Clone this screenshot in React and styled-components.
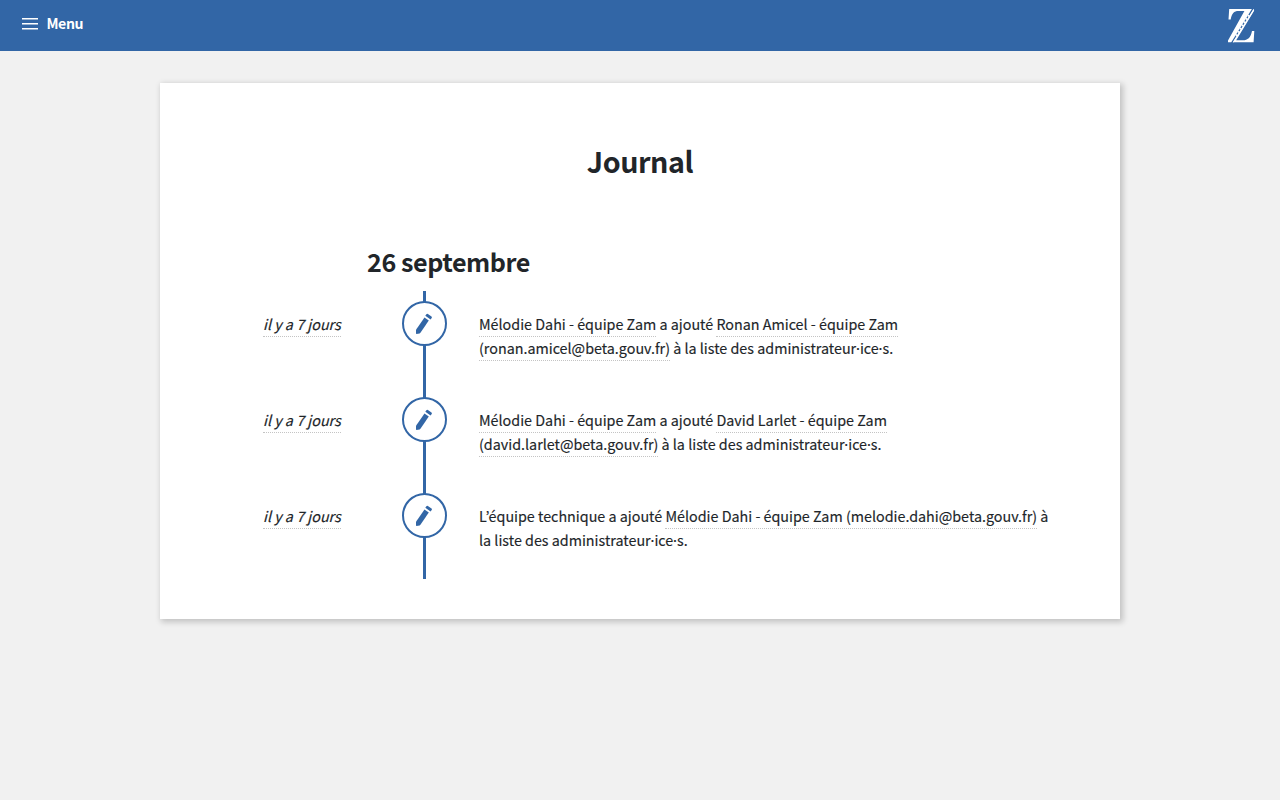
import React from "react";
import styled, { createGlobalStyle } from "styled-components";

const blue = "#3266a6";

const GlobalStyle = createGlobalStyle`
  *, *::before, *::after { box-sizing: border-box; }
  body {
    margin: 0;
    background: #f1f1f1;
    color: #212529;
    font-family: "Noto Sans CJK KR", "Open Sans", sans-serif;
    font-size: 14.32px;
    line-height: 24px;
  }
`;

const Page = styled.div`
  min-height: 100vh;
  background: #f1f1f1;
`;

const Header = styled.header`
  display: flex;
  justify-content: space-between;
  align-items: flex-start;
  height: 51px;
  padding: 9px 25px 0 22px;
  background: ${blue};
  color: #fff;
`;

const MenuButton = styled.a`
  display: flex;
  align-items: center;
  gap: 8.5px;
  height: 28px;
  font-weight: 700;
  font-size: 14.1px;
  letter-spacing: -0.4px;
`;

const Card = styled.main`
  width: 960px;
  height: 536px;
  margin: 32px auto 0;
  padding: 58px 64px 0;
  background: #fff;
  box-shadow: 2px 2px 6px 1px rgba(0, 0, 0, 0.2);
`;

const Title = styled.h1`
  margin: 0;
  font-size: 28.7px;
  line-height: 40px;
  font-weight: 700;
  letter-spacing: -0.45px;
  text-align: center;
`;

const Day = styled.h2`
  margin: 60px 0 0 143px;
  font-size: 25.1px;
  line-height: 40px;
  font-weight: 700;
  letter-spacing: -0.42px;
`;

const Timeline = styled.ol`
  margin: 10px 0 0;
  padding: 0;
  list-style: none;
`;

const Entry = styled.li`
  display: grid;
  grid-template-columns: 178px 45px 1fr;
  height: 96px;
`;

const When = styled.div`
  padding: 21px 0 0 39px;
  font-style: italic;
  white-space: nowrap;
  -webkit-text-stroke: 0.15px currentColor;
`;

const Rail = styled.div`
  display: flex;
  justify-content: center;
  padding-top: 10px;
  background: linear-gradient(${blue}, ${blue}) center / 3px 100% no-repeat;
`;

const Marker = styled.span`
  display: flex;
  align-items: center;
  justify-content: center;
  width: 45px;
  height: 45px;
  border: 2px solid ${blue};
  border-radius: 50%;
  background: #fff;
`;

const Message = styled.p`
  margin: 0;
  padding: 21px 0 0 32px;
  white-space: nowrap;
  -webkit-text-stroke: 0.15px currentColor;
`;

const Hint = styled.abbr`
  padding-bottom: 2px;
  border-bottom: 1px dotted #c4c4c4;
  text-decoration: none;
`;

const MidDot = styled.span`
  margin: 0 -2.15px;
`;

const MenuIcon = () => (
  <svg width="16" height="13" viewBox="0 0 16 13" aria-hidden="true">
    <path d="M0 1.700h16M0 6.700h16M0 11.700h16" stroke="#fff" strokeWidth="1.600" />
  </svg>
);

const Logo = () => (
  <svg width="27" height="34" viewBox="0 0 27 34" aria-label="Zam">
    <path
      fill="#fff"
      d="M1.200 0H25.800V2.200L8.200 31.300H15c4.500 0 7.800-2.600 9-9.300h2.300L25.600 33.200H0V31.500L16.400 2H10.500C6 2 3.600 4.500 2.700 10.500H.5z"
    />
    <path d="M24.800-.2 3.600 34" stroke={blue} strokeWidth="1.400" />
    <path d="M25.800.8 5.400 33.200" stroke="#fff" strokeWidth="1.100" />
    <path d="M21 6 7.700 27.400" stroke="#fff" strokeWidth="1.500" strokeDasharray="1.800 2" />
  </svg>
);

const Pencil = () => (
  <svg width="18" height="22" viewBox="0 0 18 22" aria-hidden="true">
    <g fill={blue} transform="translate(-1 0)">
      <path d="M9.500 4.600 13.800 7.600 5.600 19.600 4.600 20.500 1.500 21 .7 20.300 .9 17z" />
      <path d="M11.400 1.300q.6-.8 1.500-.2l3.600 2.500q.8.600.2 1.400l-1.100 1.500-5.300-3.700z" />
    </g>
  </svg>
);

const entries = [
  {
    author: "Mélodie Dahi - équipe Zam",
    target: ["Ronan Amicel - équipe Zam", "(ronan.amicel@beta.gouv.fr)"],
    tail: [" à la liste des administrateur·ice·s."],
  },
  {
    author: "Mélodie Dahi - équipe Zam",
    target: ["David Larlet - équipe Zam", "(david.larlet@beta.gouv.fr)"],
    tail: [" à la liste des administrateur·ice·s."],
  },
  {
    team: "L’équipe technique",
    target: ["Mélodie Dahi - équipe Zam (melodie.dahi@beta.gouv.fr)"],
    tail: [" à", "la liste des administrateur·ice·s."],
  },
];

const Dotted = ({ text }) =>
  text.split("·").map((piece, i) => (
    <React.Fragment key={i}>
      {i > 0 && <MidDot>·</MidDot>}
      {piece}
    </React.Fragment>
  ));

const Lines = ({ parts }) =>
  parts.map((part, i) => (
    <React.Fragment key={part}>
      {i > 0 && <br />}
      <Dotted text={part} />
    </React.Fragment>
  ));

export default function App() {
  return (
    <Page>
      <GlobalStyle />
      <Header>
        <MenuButton>
          <MenuIcon />
          Menu
        </MenuButton>
        <Logo />
      </Header>
      <Card>
        <Title>Journal</Title>
        <Day>26 septembre</Day>
        <Timeline>
          {entries.map((entry) => (
            <Entry key={entry.target[0]}>
              <When>
                <Hint>il y a 7 jours</Hint>
              </When>
              <Rail>
                <Marker>
                  <Pencil />
                </Marker>
              </Rail>
              <Message>
                {entry.author ? <Hint>{entry.author}</Hint> : entry.team} a ajouté{" "}
                <Hint>
                  <Lines parts={entry.target} />
                </Hint>
                <Lines parts={entry.tail} />
              </Message>
            </Entry>
          ))}
        </Timeline>
      </Card>
    </Page>
  );
}
